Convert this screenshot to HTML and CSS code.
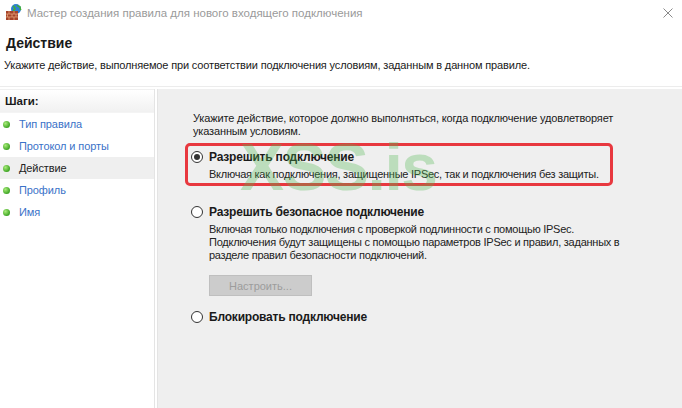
FILE: index.html
```html
<!DOCTYPE html>
<html lang="ru">
<head>
    <meta charset="UTF-8">
    <meta name="viewport" content="width=device-width, initial-scale=1.0">
    <title>Мастер создания правила для нового входящего подключения</title>
    <link rel="stylesheet" href="styles.css">
</head>
<body>
    <div class="window">
        <div class="titlebar">
            <svg class="app-icon" width="18" height="18" viewBox="0 0 18 18">
                <!-- globe behind the wall -->
                <circle cx="11" cy="6" r="5" fill="#2f7fd6"/>
                <path d="M8 3 q2 1 2 3 q-2 1 -1 3 M12 2 q1 2 3 2 q0 2 1 3" stroke="#3fae3a" stroke-width="1.6" fill="none"/>
                <!-- brick wall -->
                <rect x="1" y="8" width="12" height="9" fill="#a5432a"/>
                <path d="M1 11h12M1 14h12M4 8v3M9 8v3M2.5 11v3M7 11v3M11 11v3M4 14v3M9 14v3" stroke="#e4a27a" stroke-width="0.8"/>
            </svg>
            <span class="title">Мастер создания правила для нового входящего подключения</span>
            <svg class="close" width="10" height="10" viewBox="0 0 10 10">
                <path d="M0.5 0.5L9.5 9.5M9.5 0.5L0.5 9.5" stroke="#8a8a8a" stroke-width="1"/>
            </svg>
        </div>

        <div class="header">
            <h1>Действие</h1>
            <p>Укажите действие, выполняемое при соответствии подключения условиям, заданным в данном правиле.</p>
        </div>

        <div class="main">
            <div class="steps">
                <div class="steps-head">Шаги:</div>
                <ul class="step-list">
                    <li class="step"><span class="dot"></span>Тип правила</li>
                    <li class="step"><span class="dot"></span>Протокол и порты</li>
                    <li class="step current"><span class="dot"></span>Действие</li>
                    <li class="step"><span class="dot"></span>Профиль</li>
                    <li class="step"><span class="dot"></span>Имя</li>
                </ul>
            </div>

            <div class="content">
                <p class="intro">Укажите действие, которое должно выполняться, когда подключение удовлетворяет указанным условиям.</p>

                <div class="option highlight">
                    <div class="radio-row"><span class="radio checked"></span>Разрешить подключение</div>
                    <p class="desc">Включая как подключения, защищенные IPSec, так и подключения без защиты.</p>
                </div>

                <div class="option second">
                    <div class="radio-row"><span class="radio"></span>Разрешить безопасное подключение</div>
                    <p class="desc">Включая только подключения с проверкой подлинности с помощью IPSec.<br>Подключения будут защищены с помощью параметров IPSec и правил, заданных в<br>разделе правил безопасности подключений.</p>
                    <button class="setup" disabled>Настроить...</button>
                </div>

                <div class="option third">
                    <div class="radio-row"><span class="radio"></span>Блокировать подключение</div>
                </div>

                <div class="watermark">XSS.is</div>
            </div>
        </div>
    </div>
</body>
</html>
```

FILE: styles.css
```css
body {
    margin: 0;
    background-color: #ffffff;
    font-family: "Liberation Sans", Arial, sans-serif;
    font-size: 11px;
    color: #1a1a1a;
}
.window {
    width: 682px;
    height: 408px;
    display: flex;
    flex-direction: column;
    overflow: hidden;
}
.titlebar {
    height: 30px;
    display: flex;
    align-items: center;
    padding: 0 0 4px 5px;
    box-sizing: border-box;
}
.app-icon {
    margin-right: 4px;
    margin-top: -2px;
}
.title {
    color: #9a9a9a;
    font-size: 11.5px;
    flex: 1;
}
.close {
    margin-right: 9px;
}
.header {
    padding: 4px 0 0 4px;
    height: 52px;
    border-bottom: 1px solid #ececec;
}
.header h1 {
    margin: 0 0 0 2px;
    font-size: 14px;
    line-height: 18px;
    font-weight: bold;
}
.header p {
    margin: 6px 0 0 0;
    line-height: 14px;
    letter-spacing: -0.15px;
}
.main {
    flex: 1;
    display: flex;
    gap: 2px;
    padding-top: 2px;
}
.steps {
    width: 155px;
    border-right: 1px solid #e4e4e4;
    box-sizing: border-box;
}
.steps-head {
    height: 22px;
    line-height: 22px;
    padding-left: 5px;
    font-size: 11.5px;
    font-weight: bold;
    background: linear-gradient(#ffffff, #f1f1f1);
    border-bottom: 1px solid #f4f4f4;
    border-top: 1px solid #f0f0f0;
}
.step-list {
    list-style: none;
    margin: 0;
    padding: 0;
}
.step {
    height: 22px;
    display: flex;
    align-items: center;
    color: #3a72c8;
    letter-spacing: -0.1px;
}
.step.current {
    background-color: #efefef;
    color: #222;
}
.dot {
    width: 7px;
    height: 7px;
    border-radius: 50%;
    background: radial-gradient(circle at 35% 35%, #a8ec7a, #3fa524 70%);
    margin: 0 9px 0 3px;
}
.content {
    flex: 1;
    position: relative;
    background-color: #efefef;
    border-left: 1px solid #e4e4e4;
    padding: 23px 0 0 33px;
}
.intro {
    margin: 0 0 11px 2px;
    line-height: 13px;
    width: 440px;
    letter-spacing: -0.15px;
}
.option {
    width: 420px;
}
.radio-row {
    height: 16px;
    display: flex;
    align-items: center;
    font-size: 12px;
    font-weight: bold;
    letter-spacing: -0.2px;
}
.radio {
    width: 10px;
    height: 10px;
    border: 1px solid #333;
    border-radius: 50%;
    background-color: #fff;
    margin-right: 6px;
    position: relative;
}
.radio.checked::after {
    content: "";
    position: absolute;
    left: 2px;
    top: 2px;
    width: 6px;
    height: 6px;
    border-radius: 50%;
    background-color: #333;
}
.desc {
    margin: 3px 0 0 18px;
    line-height: 13px;
    white-space: nowrap;
    letter-spacing: -0.25px;
    color: #222;
}
.highlight {
    position: relative;
}
.highlight::after {
    content: "";
    position: absolute;
    left: -6px;
    top: -6px;
    width: 428px;
    height: 43px;
    border: 3px solid #e8383f;
    border-radius: 5px;
    box-sizing: border-box;
}
.second {
    margin-top: 23px;
}
.setup {
    display: block;
    margin: 13px 0 0 18px;
    width: 103px;
    height: 21px;
    background-color: #cccccc;
    border: 1px solid #bfbfbf;
    color: #9c9c9c;
    font-family: "Liberation Sans", Arial, sans-serif;
    font-size: 11px;
    padding: 0;
}
.third {
    margin-top: 13px;
}
.watermark {
    position: absolute;
    left: 82px;
    top: 45px;
    font-size: 66px;
    line-height: 66px;
    font-weight: bold;
    letter-spacing: -1.5px;
    color: rgba(80, 185, 80, 0.32);
    pointer-events: none;
}
```
